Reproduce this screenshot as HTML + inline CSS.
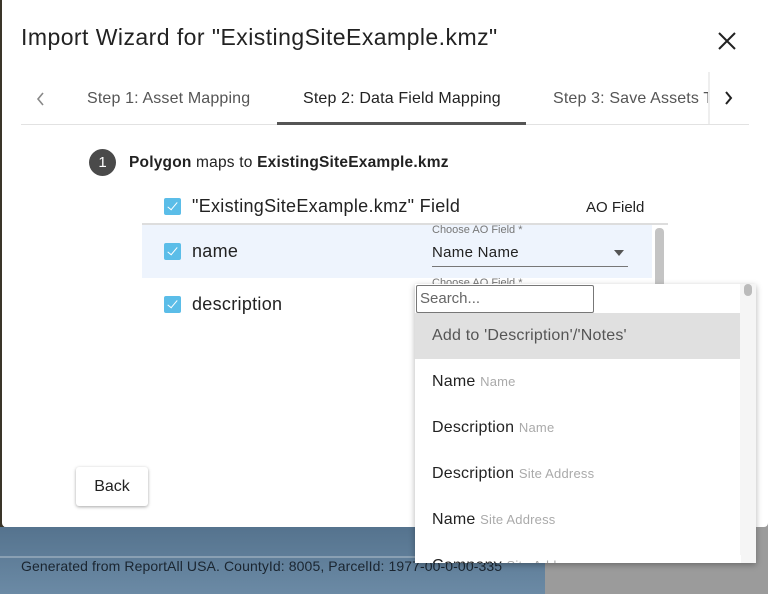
<!DOCTYPE html>
<html><head><style>
*{box-sizing:border-box;margin:0;padding:0}
body{width:768px;height:594px;overflow:hidden;position:relative;font-family:"Liberation Sans",sans-serif;background:#9b9b9b;color:#222}
.abs{position:absolute}
.cb{position:absolute;width:17px;height:17px;background:#5bbde8;border-radius:2px}
.cb:after{content:"";position:absolute;left:6px;top:2px;width:4px;height:9px;border:solid #fff;border-width:0 1.5px 1.5px 0;transform:rotate(40deg)}
.item{position:absolute;left:432px;font-size:16px;color:#222;letter-spacing:.2px}
.item span{font-size:13px;color:#aaa}
</style></head><body>
<div class="abs" style="left:0;top:0;width:4px;height:527px;background:#3a3529"></div>
<div class="abs" style="left:0;top:527px;width:545px;height:67px;background:linear-gradient(#55738e,#6b8aa5)"></div>
<div class="abs" style="left:0;top:556px;width:545px;height:2px;background:#8aa0b3"></div>
<div class="abs" style="left:21px;top:558px;font-size:14px;color:#1a2530;letter-spacing:.1px">Generated from ReportAll USA. CountyId: 8005, ParcelId: 1977-00-0-00-335</div>
<div class="abs" style="left:2px;top:0;width:766px;height:527px;background:#fff;border-radius:0 0 4px 4px"></div>
<div class="abs" style="left:21px;top:24px;font-size:23px;letter-spacing:.45px;color:#222">Import Wizard for "ExistingSiteExample.kmz"</div>
<svg class="abs" style="left:718px;top:32px" width="18" height="18"><path d="M1 1L17 17M17 1L1 17" stroke="#222" stroke-width="2"/></svg>
<svg class="abs" style="left:36px;top:92px" width="10" height="14"><path d="M7 1L2 7L7 13" stroke="#888" stroke-width="1.6" fill="none"/></svg>
<div class="abs" style="left:87px;top:90px;font-size:16px;color:#555;letter-spacing:.15px">Step 1: Asset Mapping</div>
<div class="abs" style="left:303px;top:90px;font-size:16px;color:#222;letter-spacing:.15px">Step 2: Data Field Mapping</div>
<div class="abs" style="left:553px;top:90px;width:155px;overflow:hidden;white-space:nowrap;font-size:16px;color:#555;letter-spacing:.15px">Step 3: Save Assets To</div>
<div class="abs" style="left:708px;top:72px;width:2px;height:53px;background:#eee"></div>
<svg class="abs" style="left:724px;top:91px" width="10" height="14"><path d="M2 1L7 7L2 13" stroke="#222" stroke-width="2" fill="none"/></svg>
<div class="abs" style="left:21px;top:124px;width:728px;height:1px;background:#e2e2e2"></div>
<div class="abs" style="left:277px;top:122px;width:249px;height:3px;background:#555"></div>
<div class="abs" style="left:89px;top:149px;width:27px;height:27px;border-radius:50%;background:#4a4a4a;color:#fff;font-size:15px;text-align:center;line-height:27px">1</div>
<div class="abs" style="left:129px;top:154px;font-size:15.5px;letter-spacing:.2px"><b>Polygon</b> maps to <b>ExistingSiteExample.kmz</b></div>
<div class="cb" style="left:164px;top:198px"></div>
<div class="abs" style="left:192px;top:196px;font-size:18px;letter-spacing:.3px">"ExistingSiteExample.kmz" Field</div>
<div class="abs" style="left:586px;top:199px;font-size:15px">AO Field</div>
<div class="abs" style="left:142px;top:223px;width:526px;height:2px;background:#ddd"></div>
<div class="abs" style="left:142px;top:225px;width:510px;height:53px;background:#eef4fd"></div>
<div class="abs" style="left:655px;top:228px;width:9px;height:60px;background:#c4c4c4;border-radius:4px"></div>
<div class="cb" style="left:164px;top:243px"></div>
<div class="abs" style="left:192px;top:241px;font-size:18px;letter-spacing:.3px">name</div>
<div class="abs" style="left:432px;top:224px;font-size:11px;color:#777">Choose AO Field *</div>
<div class="abs" style="left:432px;top:244px;font-size:15px;letter-spacing:.3px">Name Name</div>
<div class="abs" style="left:614px;top:250px;border:5px solid transparent;border-top:6px solid #555"></div>
<div class="abs" style="left:432px;top:266px;width:196px;height:1px;background:#777"></div>
<div class="abs" style="left:432px;top:277px;font-size:11px;color:#777">Choose AO Field *</div>
<div class="cb" style="left:164px;top:296px"></div>
<div class="abs" style="left:192px;top:294px;font-size:18px;letter-spacing:.3px">description</div>
<div class="abs" style="left:76px;top:467px;width:72px;height:39px;background:#fff;border-radius:3px;box-shadow:0 1px 3px rgba(0,0,0,.35);font-size:16px;text-align:center;line-height:39px">Back</div>
<div class="abs" style="left:415px;top:284px;width:341px;height:279px;background:#fff;box-shadow:0 2px 6px rgba(0,0,0,.3);overflow:hidden">
 <div class="abs" style="left:325px;top:0;width:16px;height:279px;background:#f5f5f5"></div>
 <div class="abs" style="left:329px;top:0;width:8px;height:12px;background:#bbb;border-radius:4px"></div>
 <div class="abs" style="left:1px;top:1px;width:178px;height:28px;border:1px solid #777;border-radius:2px;font-size:15px;color:#666;padding:4px 3px">Search...</div>
 <div class="abs" style="left:0;top:29px;width:325px;height:46px;background:#e0e0e0"></div>
</div>
<div class="item" style="top:327px;color:#555">Add to 'Description'/'Notes'</div>
<div class="item" style="top:373px">Name <span>Name</span></div>
<div class="item" style="top:419px">Description <span>Name</span></div>
<div class="item" style="top:465px">Description <span>Site Address</span></div>
<div class="item" style="top:511px">Name <span>Site Address</span></div>
<div class="abs" style="left:415px;top:555px;width:326px;height:8px;overflow:hidden;background:#fff"><div class="item" style="left:17px;top:2px">Company <span>Site Address</span></div></div>
</body></html>
